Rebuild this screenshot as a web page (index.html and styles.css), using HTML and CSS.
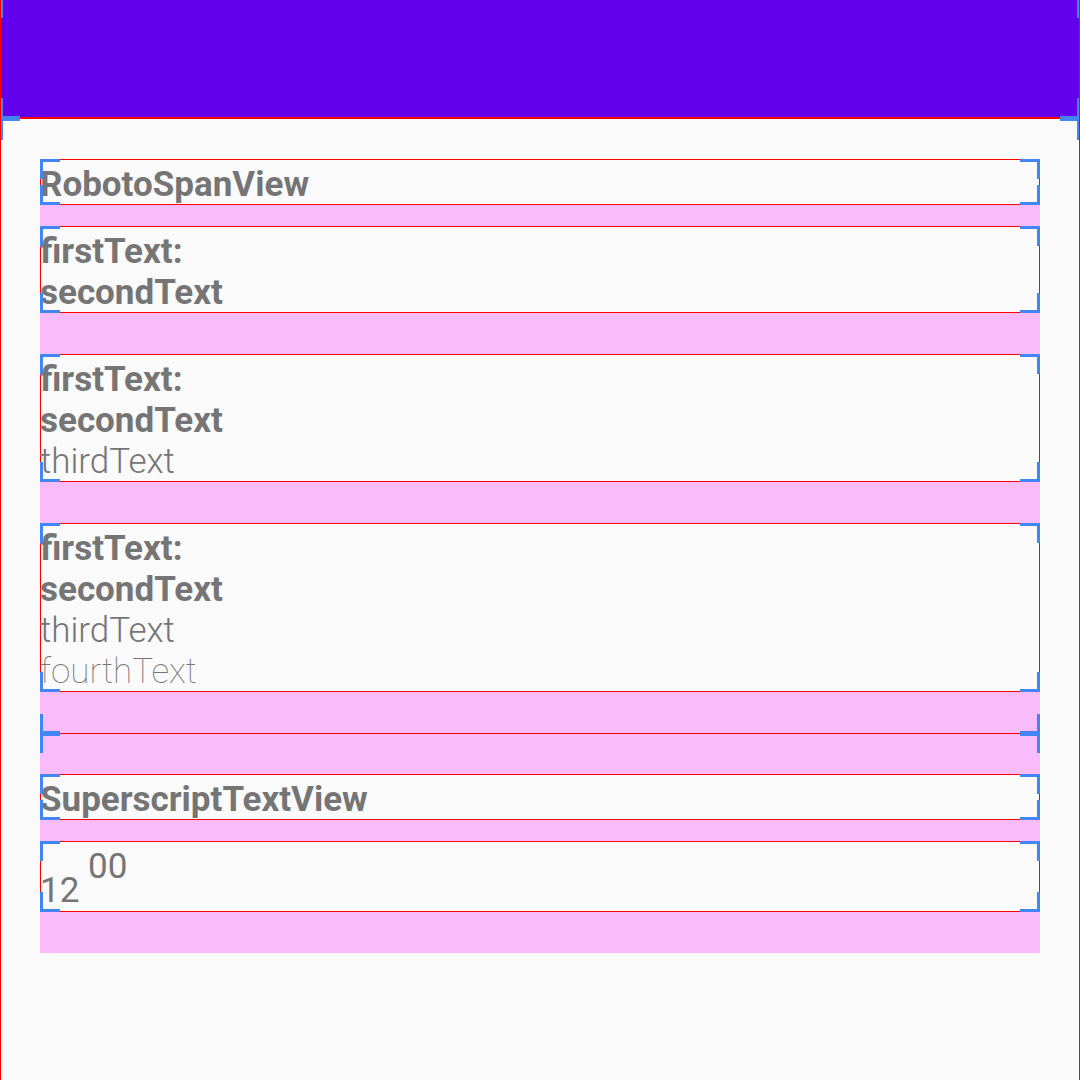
FILE: index.html
```html
<!DOCTYPE html>
<html>
<head>
<meta charset="utf-8">
<link rel="stylesheet" href="styles.css">
</head>
<body>
<div class="appbar"></div>
<div class="content">
  <div class="slot slot-s"><div class="view text title">RobotoSpanView</div></div>
  <div class="slot"><div class="view text"><span class="bold">firstText:</span><br><span class="bold">secondText</span></div></div>
  <div class="slot"><div class="view text"><span class="bold">firstText:</span><br><span class="bold">secondText</span><br><span class="light">thirdText</span></div></div>
  <div class="slot"><div class="view text"><span class="bold">firstText:</span><br><span class="bold">secondText</span><br><span class="light">thirdText</span><br><span class="thin">fourthText</span></div></div>
  <div class="slot slot-d"><div class="divider"></div></div>
  <div class="slot slot-s"><div class="view text title">SuperscriptTextView</div></div>
  <div class="slot"><div class="view text sup-view">12 <span class="sup">00</span></div></div>
</div>
</body>
</html>
```
FILE: styles.css
```css
:root {
  --blue: #4285f4;
  --red: #ff0000;
  --pink: #f9bbf9;
}
html, body {
  margin: 0;
  padding: 0;
}
body {
  width: 1080px;
  height: 1080px;
  overflow: hidden;
  background: #fafafa;
  font-family: Roboto, "Noto Sans", sans-serif;
  color: #757575;
}
.appbar {
  position: relative;
  margin-top: -2px;
  height: 120px;
  background: #6200ee;
  box-shadow: inset 0 0 0 1px var(--red);
}
.appbar::after,
.content::after {
  content: "";
  position: absolute;
  inset: 0;
  pointer-events: none;
  background:
    linear-gradient(var(--blue), var(--blue)) left 1px top 0 / 19px 2px no-repeat,
    linear-gradient(var(--blue), var(--blue)) left 1px top 0 / 2px 20px no-repeat,
    linear-gradient(var(--blue), var(--blue)) right 1px top 0 / 19px 2px no-repeat,
    linear-gradient(var(--blue), var(--blue)) right 1px top 0 / 2px 20px no-repeat,
    linear-gradient(var(--blue), var(--blue)) left 1px bottom 0 / 19px 2px no-repeat,
    linear-gradient(var(--blue), var(--blue)) left 1px bottom 0 / 2px 20px no-repeat,
    linear-gradient(var(--blue), var(--blue)) right 1px bottom 0 / 19px 2px no-repeat,
    linear-gradient(var(--blue), var(--blue)) right 1px bottom 0 / 2px 20px no-repeat;
}
.content {
  position: relative;
  min-height: 1000px;
  padding: 41px 40px 0;
  box-shadow: inset 0 0 0 1px var(--red);
}
.content::after {
  top: 0;
  bottom: auto;
  height: 22px;
  background:
    linear-gradient(var(--blue), var(--blue)) left 1px top 0 / 19px 3px no-repeat,
    linear-gradient(var(--blue), var(--blue)) left 1px top 0 / 2px 22px no-repeat,
    linear-gradient(var(--blue), var(--blue)) right 1px top 0 / 19px 3px no-repeat,
    linear-gradient(var(--blue), var(--blue)) right 1px top 0 / 2px 22px no-repeat;
}
.slot {
  background: var(--pink);
  padding-bottom: 41px;
}
.slot-s {
  padding-bottom: 21px;
}
.slot-d {
  padding-bottom: 40px;
}
.view {
  position: relative;
  background: #fafafa;
  box-shadow: inset 0 0 0 1px var(--red);
}
.view::after,
.divider::after {
  content: "";
  position: absolute;
  inset: 0;
  pointer-events: none;
  background:
    linear-gradient(var(--blue), var(--blue)) left top / 20px 3px no-repeat,
    linear-gradient(var(--blue), var(--blue)) left top / 3px 20px no-repeat,
    linear-gradient(var(--blue), var(--blue)) right top / 20px 3px no-repeat,
    linear-gradient(var(--blue), var(--blue)) right top / 3px 20px no-repeat,
    linear-gradient(var(--blue), var(--blue)) left bottom / 20px 3px no-repeat,
    linear-gradient(var(--blue), var(--blue)) left bottom / 3px 20px no-repeat,
    linear-gradient(var(--blue), var(--blue)) right bottom / 20px 3px no-repeat,
    linear-gradient(var(--blue), var(--blue)) right bottom / 3px 20px no-repeat;
}
.text {
  font-size: 35px;
  line-height: 41px;
  padding: 5px 0 0;
  white-space: nowrap;
}
.title {
  font-weight: 700;
}
.bold {
  font-weight: 700;
}
.light {
  font-weight: 300;
}
.thin {
  font-weight: 100;
}
.sup-view {
  padding-bottom: 1px;
}
.sup {
  vertical-align: 24px;
}
.divider {
  position: relative;
  height: 1px;
  background: var(--red);
}
.divider::after {
  top: -19px;
  bottom: -19px;
  background:
    linear-gradient(var(--blue), var(--blue)) left top 17px / 20px 5px no-repeat,
    linear-gradient(var(--blue), var(--blue)) left top / 3px 39px no-repeat,
    linear-gradient(var(--blue), var(--blue)) right top 17px / 20px 5px no-repeat,
    linear-gradient(var(--blue), var(--blue)) right top / 3px 39px no-repeat;
}
```
